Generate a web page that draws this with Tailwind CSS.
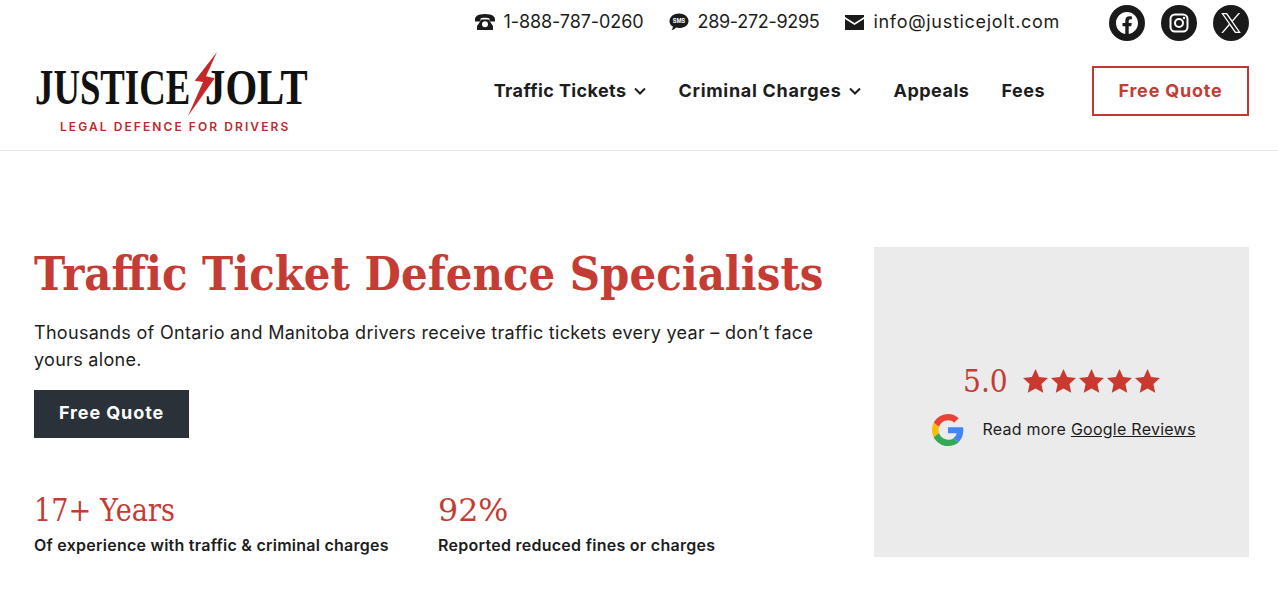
<!DOCTYPE html>
<html lang="en">
<head>
<meta charset="utf-8">
<title>Justice Jolt</title>
<script src="https://cdn.jsdelivr.net/npm/@tailwindcss/browser@4"></script>
</head>
<body class="bg-white font-['Inter',sans-serif] text-[#1d1d1d] overflow-hidden">
<div class="h-[599px] w-[1278px] overflow-hidden">
<header class="h-[151px] border-b border-[#e8e8e8] pl-[34px] pr-[29px] flex justify-between">
  <a class="mt-[51px] flex flex-col w-[274px] h-[82px] shrink-0">
    <div class="flex items-start h-[66px] font-['Liberation_Serif',serif] font-bold text-[50px] leading-[54px] text-[#111] whitespace-nowrap">
      <span class="block w-[153px] mt-[9px] ml-[1px] origin-left scale-x-[0.735]">JUSTICE</span>
      <svg class="w-[30px] h-[66px] shrink-0" viewBox="0 0 30 66"><path d="M29 1 6.700 29.700 15 31 0 65 26.700 27.300 18 25.300Z" fill="#c5282b"/></svg>
      <span class="block w-[104px] mt-[9px] ml-[-13px] origin-left scale-x-[0.815]">JOLT</span>
    </div>
    <div class="text-[12px] leading-[14px] mt-[3px] ml-[26px] font-semibold tracking-[2.08px] text-[#b92b2e] whitespace-nowrap">LEGAL DEFENCE FOR DRIVERS</div>
  </a>
  <div class="flex flex-col items-end">
    <div class="flex items-center h-[46px]">
      <div class="flex items-center text-[18px] leading-[44px] mb-[2px]">
        <svg class="w-[20px] h-[18px] mr-[9px]" viewBox="0 0 20 18"><path d="M0 6.500C0 4 2 1 10 1S20 4 20 6.500V8.500H14.500V6C14.500 5 12 4.800 10 4.800S5.500 5 5.500 6V8.500H0Z" fill="#1a1a1a"/><path d="M6.500 6.500H13.500L18 13V17H2V13ZM10 8.300A3 3 0 1 0 10 14.300 3 3 0 1 0 10 8.300Z" fill="#1a1a1a" fill-rule="evenodd"/></svg>
        <span class="tracking-[-0.1px]">1-888-787-0260</span>
        <svg class="w-[20px] h-[18px] ml-[26px] mr-[8px]" viewBox="0 0 20 18"><path d="M10 0.500C15 0.500 19.500 3.500 19.500 8S15 15 10 15C9 15 8 15 7 14.600 6 15.800 4.500 17 2.500 17.300 3.500 16 4 14.500 3.800 13.500 1.500 12.300 0.500 10.300 0.500 8 0.500 3.500 5 0.500 10 0.500Z" fill="#1a1a1a"/><text x="10" y="10.300" text-anchor="middle" font-size="5.500" font-weight="700" font-family="Inter" fill="#fff">SMS</text></svg>
        <span class="tracking-[-0.3px]">289-272-9295</span>
        <svg class="w-[19px] h-[15px] ml-[26px] mr-[9px]" viewBox="0 0 19 15"><path d="M0 0H19V2L9.500 8 0 2ZM0 4L9.500 10 19 4V15H0Z" fill="#1a1a1a"/></svg>
        <span class="tracking-[0.7px]">info@justicejolt.com</span>
      </div>
      <div class="flex gap-[16px] ml-[49px]">
        <span class="w-[36px] h-[36px] rounded-full bg-[#1a1a1a] flex items-center justify-center">
          <svg class="w-[22px] h-[22px]" viewBox="0 0 24 24"><path fill="#fff" d="M24 12.070C24 5.400 18.630 0 12 0S0 5.400 0 12.070C0 18.100 4.390 23.100 10.130 24v-8.440H7.080v-3.490h3.050V9.410c0-3.020 1.790-4.690 4.530-4.690 1.310 0 2.680.24 2.680.24v2.970h-1.510c-1.490 0-1.960.93-1.960 1.880v2.260h3.330l-.53 3.490h-2.800V24C19.610 23.100 24 18.100 24 12.070Z"/></svg>
        </span>
        <span class="w-[36px] h-[36px] rounded-full bg-[#1a1a1a] flex items-center justify-center">
          <svg class="w-[20px] h-[20px]" viewBox="0 0 20 20" fill="none" stroke="#fff" stroke-width="2"><rect x="1.500" y="1.500" width="17" height="17" rx="4.500"/><circle cx="10" cy="10" r="4"/><circle cx="15" cy="5" r="1.200" fill="#fff" stroke="none"/></svg>
        </span>
        <span class="w-[36px] h-[36px] rounded-full bg-[#1a1a1a] flex items-center justify-center">
          <svg class="w-[20px] h-[20px]" viewBox="0 0 24 24"><path fill="#fff" fill-rule="evenodd" d="M14.280 10.150 23.040 0h-2.080l-7.600 8.810L7.290 0H.28l9.180 13.270L.28 24h2.080l8.030-9.310L16.810 24h7.010L14.280 10.150ZM3.110 1.570h3.190l14.690 20.930h-3.190L3.110 1.570Z"/></svg>
        </span>
      </div>
    </div>
    <nav class="flex items-center mt-[20px] font-bold text-[18px] leading-[50px]">
      <a class="flex items-center tracking-[0.4px]">Traffic Tickets<svg class="w-[12px] h-[8px] ml-[8px]" viewBox="0 0 12 8" fill="none" stroke="#1d1d1d" stroke-width="2"><path d="M1 1.500 6 6.500 11 1.500"/></svg></a>
      <a class="flex items-center ml-[32px] tracking-[0.7px]">Criminal Charges<svg class="w-[12px] h-[8px] ml-[8px]" viewBox="0 0 12 8" fill="none" stroke="#1d1d1d" stroke-width="2"><path d="M1 1.500 6 6.500 11 1.500"/></svg></a>
      <a class="ml-[32px] tracking-[0.5px]">Appeals</a>
      <a class="ml-[32px] tracking-[0.5px]">Fees</a>
      <a class="ml-[47px] w-[157px] h-[50px] border-2 border-[#b93c34] text-[#c23d33] tracking-[0.8px] flex items-center justify-center">Free Quote</a>
    </nav>
  </div>
</header>
<main class="flex pl-[34px] pr-[29px] pt-[96px] justify-between">
  <section class="w-[800px]">
    <h1 class="font-['DejaVu_Serif',serif] font-bold text-[47px] leading-[56px] mt-[-1px] text-[#c43c33] whitespace-nowrap origin-left scale-x-[0.893]">Traffic Ticket Defence Specialists</h1>
    <p class="text-[18px] leading-[27px] mt-[17px] tracking-[0.3px]">Thousands of Ontario and Manitoba drivers receive traffic tickets every year – don’t face yours alone.</p>
    <a class="mt-[17px] pb-[3px] flex items-center justify-center w-[155px] h-[48px] bg-[#2b3138] text-white font-bold text-[18px] tracking-[0.9px]">Free Quote</a>
    <div class="flex mt-[50px]">
      <div class="w-[404px]">
        <div class="font-['DejaVu_Serif',serif] text-[32px] leading-[44px] text-[#c43c33] origin-left scale-x-[0.85] whitespace-nowrap">17+ Years</div>
        <div class="text-[16px] leading-[26px] font-semibold tracking-[0.25px] whitespace-nowrap">Of experience with traffic &amp; criminal charges</div>
      </div>
      <div>
        <div class="font-['DejaVu_Serif',serif] text-[32px] leading-[44px] text-[#c43c33] origin-left scale-x-[0.99] whitespace-nowrap">92%</div>
        <div class="text-[16px] leading-[26px] font-semibold tracking-[0.27px] whitespace-nowrap">Reported reduced fines or charges</div>
      </div>
    </div>
  </section>
  <aside class="w-[375px] h-[310px] bg-[#ebebeb] flex flex-col items-center justify-center">
    <div class="flex items-center mt-[1px]">
      <span class="block w-[43px] font-['DejaVu_Serif',serif] text-[32px] leading-[44px] text-[#c43c33] origin-left scale-x-[0.88]">5.0</span>
      <div class="flex ml-[17px] gap-[3px]">
        <svg class="w-[25px] h-[24px]" viewBox="0 0 24 23"><path fill="#c9392f" d="M12 0 15.500 7.700 24 8.700 17.700 14.400 19.400 22.800 12 18.600 4.600 22.800 6.300 14.400 0 8.700 8.500 7.700Z"/></svg>
        <svg class="w-[25px] h-[24px]" viewBox="0 0 24 23"><path fill="#c9392f" d="M12 0 15.500 7.700 24 8.700 17.700 14.400 19.400 22.800 12 18.600 4.600 22.800 6.300 14.400 0 8.700 8.500 7.700Z"/></svg>
        <svg class="w-[25px] h-[24px]" viewBox="0 0 24 23"><path fill="#c9392f" d="M12 0 15.500 7.700 24 8.700 17.700 14.400 19.400 22.800 12 18.600 4.600 22.800 6.300 14.400 0 8.700 8.500 7.700Z"/></svg>
        <svg class="w-[25px] h-[24px]" viewBox="0 0 24 23"><path fill="#c9392f" d="M12 0 15.500 7.700 24 8.700 17.700 14.400 19.400 22.800 12 18.600 4.600 22.800 6.300 14.400 0 8.700 8.500 7.700Z"/></svg>
        <svg class="w-[25px] h-[24px]" viewBox="0 0 24 23"><path fill="#c9392f" d="M12 0 15.500 7.700 24 8.700 17.700 14.400 19.400 22.800 12 18.600 4.600 22.800 6.300 14.400 0 8.700 8.500 7.700Z"/></svg>
      </div>
    </div>
    <div class="flex items-center mt-[9px] ml-[5px]">
      <svg class="w-[32px] h-[32px] mt-[2px]" viewBox="0 0 48 48"><path fill="#EA4335" d="M24 9.500c3.540 0 6.710 1.220 9.210 3.600l6.850-6.850C35.900 2.380 30.470 0 24 0 14.620 0 6.510 5.380 2.560 13.220l7.980 6.190C12.430 13.720 17.740 9.500 24 9.500z"/><path fill="#4285F4" d="M46.980 24.550c0-1.570-.15-3.090-.38-4.550H24v9.020h12.940c-.58 2.960-2.260 5.480-4.780 7.180l7.730 6c4.510-4.180 7.090-10.360 7.090-17.650z"/><path fill="#FBBC05" d="M10.530 28.590c-.48-1.450-.76-2.990-.76-4.590s.27-3.140.76-4.590l-7.980-6.190C.92 16.460 0 20.120 0 24c0 3.880.92 7.540 2.560 10.780l7.970-6.190z"/><path fill="#34A853" d="M24 48c6.480 0 11.930-2.130 15.890-5.810l-7.730-6c-2.150 1.450-4.920 2.300-8.160 2.300-6.260 0-11.570-4.220-13.470-9.910l-7.980 6.190C6.510 42.620 14.620 48 24 48z"/></svg>
      <span class="ml-[18px] text-[16px] leading-[24px] tracking-[0.25px]">Read more <span class="underline">Google Reviews</span></span>
    </div>
  </aside>
</main>
</div>
</body>
</html>
